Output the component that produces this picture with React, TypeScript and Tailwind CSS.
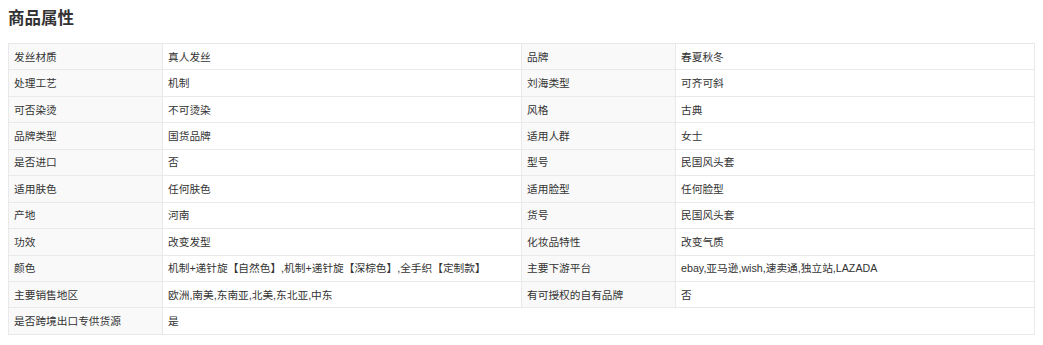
const rows: [string, string, string?, string?][] = [
  ["发丝材质", "真人发丝", "品牌", "春夏秋冬"],
  ["处理工艺", "机制", "刘海类型", "可齐可斜"],
  ["可否染烫", "不可烫染", "风格", "古典"],
  ["品牌类型", "国货品牌", "适用人群", "女士"],
  ["是否进口", "否", "型号", "民国风头套"],
  ["适用肤色", "任何肤色", "适用脸型", "任何脸型"],
  ["产地", "河南", "货号", "民国风头套"],
  ["功效", "改变发型", "化妆品特性", "改变气质"],
  ["颜色", "机制+递针旋【自然色】,机制+递针旋【深棕色】,全手织【定制款】", "主要下游平台", "ebay,亚马逊,wish,速卖通,独立站,LAZADA"],
  ["主要销售地区", "欧洲,南美,东南亚,北美,东北亚,中东", "有可授权的自有品牌", "否"],
  ["是否跨境出口专供货源", "是"],
];

const label = "h-[26.45px] whitespace-nowrap border border-[#e9e9e9] bg-[#f9f9f9] pl-[5px] pr-2 align-middle";
const value = "h-[26.45px] whitespace-nowrap border border-[#e9e9e9] bg-white pl-[5px] pr-2 align-middle";

export default function App() {
  return (
    <div
      className="min-h-[345px] bg-white px-2 pt-[7px] text-[#333]"
      style={{ fontFamily: '"Microsoft YaHei", "Liberation Sans", "Noto Sans CJK SC", sans-serif' }}
    >
      <h2 className="text-[16.5px] font-bold leading-[22px] text-[#333]">商品属性</h2>
      <table className="mt-[14px] w-[1027px] table-fixed border-collapse text-[10.7px] leading-[16px]">
        <colgroup>
          <col className="w-[154px]" />
          <col className="w-[359px]" />
          <col className="w-[154px]" />
          <col className="w-[359px]" />
        </colgroup>
        <tbody>
          {rows.map(([a, b, c, d]) => (
            <tr key={a}>
              <td className={label}>{a}</td>
              {c === undefined ? (
                <td className={value} colSpan={3}>
                  {b}
                </td>
              ) : (
                <>
                  <td className={value}>{b}</td>
                  <td className={label}>{c}</td>
                  <td className={value}>{d}</td>
                </>
              )}
            </tr>
          ))}
        </tbody>
      </table>
    </div>
  );
}
